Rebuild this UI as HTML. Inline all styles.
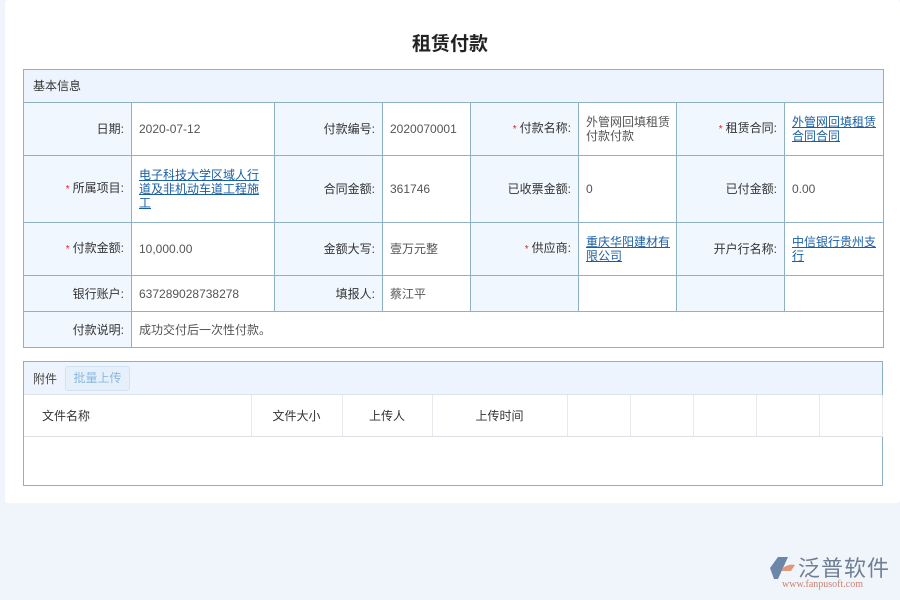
<!DOCTYPE html>
<html><head><meta charset="utf-8"><style>
*{margin:0;padding:0;box-sizing:border-box}
body{width:900px;height:600px;background:#f0f5fc;font-family:"Liberation Sans","Noto Sans CJK SC",sans-serif;font-size:12px;color:#444;position:relative;overflow:hidden}
.card{position:absolute;left:5px;top:0;width:895px;height:503px;background:#fff;border-radius:3px}
h1{position:absolute;left:0;width:900px;top:29px;text-align:center;font-size:19px;font-weight:bold;color:#222}
table{border-collapse:collapse;table-layout:fixed;position:absolute}
.t1{left:23px;top:69px;width:860px}
.t1 td{border:1px solid #8fb1c6;vertical-align:middle;padding:0 3px 0 7px;line-height:14px;color:#555}
.t1 td.l{background:#f0f7fe;text-align:right;padding-right:7px;color:#333}
.t1 td.hd{background:#eef4fd;text-align:left;padding-left:9px;color:#333}
.t1 td.w{padding-right:14px}
.s{color:#e02020;font-size:10px;margin-right:3px}
a{color:#1a5fa3;text-decoration:underline}
.box{position:absolute;left:23px;top:361px;width:860px;height:125px;border:1px solid #8fb1c6}
.bh{height:33px;background:#eef4fd;border-bottom:1px solid #dde3ea;position:relative}
.bh span{position:absolute;left:9px;top:8px}
.btn{position:absolute;left:41px;top:4px;width:65px;height:25px;border:1px solid #d0e2f3;background:#e6f0fb;color:#8ab8e0;border-radius:3px;text-align:center;line-height:23px}
.t2{left:0;top:33px;width:858px}
.t2 td{height:41px;border-right:1px solid #e6e9ed;border-bottom:1px solid #dde1e6;text-align:center;color:#333}
.logo{position:absolute;left:770px;top:553px}
</style></head><body>
<div class="card"></div>
<h1>租赁付款</h1>
<table class="t1">
<colgroup><col style="width:108px"><col style="width:143px"><col style="width:108px"><col style="width:88px"><col style="width:108px"><col style="width:98px"><col style="width:108px"><col style="width:99px"></colgroup>
<tr style="height:33px"><td class="hd" colspan="8">基本信息</td></tr>
<tr style="height:53px"><td class="l">日期:</td><td>2020-07-12</td><td class="l">付款编号:</td><td>2020070001</td><td class="l"><span class="s">*</span>付款名称:</td><td>外管网回填租赁付款付款</td><td class="l"><span class="s">*</span>租赁合同:</td><td><a>外管网回填租赁合同合同</a></td></tr>
<tr style="height:67px"><td class="l"><span class="s">*</span>所属项目:</td><td class="w"><a>电子科技大学区域人行道及非机动车道工程施工</a></td><td class="l">合同金额:</td><td>361746</td><td class="l">已收票金额:</td><td>0</td><td class="l">已付金额:</td><td>0.00</td></tr>
<tr style="height:53px"><td class="l"><span class="s">*</span>付款金额:</td><td>10,000.00</td><td class="l">金额大写:</td><td>壹万元整</td><td class="l"><span class="s">*</span>供应商:</td><td><a>重庆华阳建材有限公司</a></td><td class="l">开户行名称:</td><td><a>中信银行贵州支行</a></td></tr>
<tr style="height:36px"><td class="l">银行账户:</td><td>637289028738278</td><td class="l">填报人:</td><td>蔡江平</td><td class="l"></td><td></td><td class="l"></td><td></td></tr>
<tr style="height:36px"><td class="l">付款说明:</td><td colspan="7">成功交付后一次性付款。</td></tr>
</table>
<div class="box">
<div class="bh"><span>附件</span><div class="btn">批量上传</div></div>
<table class="t2">
<colgroup><col style="width:227px"><col style="width:91px"><col style="width:90px"><col style="width:135px"><col style="width:63px"><col style="width:63px"><col style="width:63px"><col style="width:63px"><col style="width:63px"></colgroup>
<tr><td style="text-align:left;padding-left:18px">文件名称</td><td>文件大小</td><td>上传人</td><td>上传时间</td><td></td><td></td><td></td><td></td><td></td></tr>
</table>
</div>
<div class="logo">
<svg width="26" height="26" viewBox="0 0 26 26" style="position:absolute;left:0;top:2px"><path d="M8 2h10L8 24H4L0 13z" fill="#6b86a8"/><path d="M12 14c4-4 9-5 13-4l-4 6h-9z" fill="#e0987a"/></svg>
<span style="position:absolute;left:28px;top:-2px;font-size:22px;color:#6f7f93;white-space:nowrap;letter-spacing:1px">泛普软件</span>
<span style="position:absolute;left:12px;top:26px;font-size:10px;color:#c88470;font-family:'Liberation Serif',serif;white-space:nowrap">www.fanpusoft.com</span>
</div>
</body></html>
